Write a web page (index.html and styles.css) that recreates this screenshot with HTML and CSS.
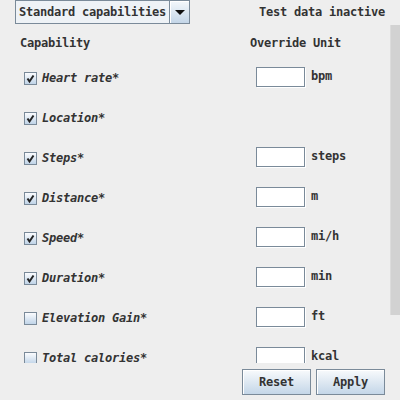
FILE: index.html
```html
<!DOCTYPE html>
<html>
<head>
<meta charset="utf-8">
<link rel="stylesheet" href="styles.css">
</head>
<body>
<div class="top">
  <div class="combo">
    <div class="combo-text">Standard capabilities</div>
    <div class="combo-btn"><span class="arrow"></span></div>
  </div>
  <div class="status">Test data inactive</div>
</div>
<div class="main">
  <div class="viewport">
    <div class="grid">
      <div class="hdr">Capability</div>
      <div class="hdr">Override</div>
      <div class="hdr unit-h">Unit</div>

      <div class="cap"><span class="cb"><svg viewBox="0 0 11 11" width="11" height="11"><path d="M2.5 5.5 L4.5 8.5 L8.5 2.5" fill="none" stroke="#222" stroke-width="2"/></svg></span><span class="lbl">Heart rate*</span></div>
      <div class="ov"><span class="field"></span></div>
      <div class="unit">bpm</div>

      <div class="cap"><span class="cb"><svg viewBox="0 0 11 11" width="11" height="11"><path d="M2.5 5.5 L4.5 8.5 L8.5 2.5" fill="none" stroke="#222" stroke-width="2"/></svg></span><span class="lbl">Location*</span></div>
      <div class="ov"></div>
      <div class="unit"></div>

      <div class="cap"><span class="cb"><svg viewBox="0 0 11 11" width="11" height="11"><path d="M2.5 5.5 L4.5 8.5 L8.5 2.5" fill="none" stroke="#222" stroke-width="2"/></svg></span><span class="lbl">Steps*</span></div>
      <div class="ov"><span class="field"></span></div>
      <div class="unit">steps</div>

      <div class="cap"><span class="cb"><svg viewBox="0 0 11 11" width="11" height="11"><path d="M2.5 5.5 L4.5 8.5 L8.5 2.5" fill="none" stroke="#222" stroke-width="2"/></svg></span><span class="lbl">Distance*</span></div>
      <div class="ov"><span class="field"></span></div>
      <div class="unit">m</div>

      <div class="cap"><span class="cb"><svg viewBox="0 0 11 11" width="11" height="11"><path d="M2.5 5.5 L4.5 8.5 L8.5 2.5" fill="none" stroke="#222" stroke-width="2"/></svg></span><span class="lbl">Speed*</span></div>
      <div class="ov"><span class="field"></span></div>
      <div class="unit">mi/h</div>

      <div class="cap"><span class="cb"><svg viewBox="0 0 11 11" width="11" height="11"><path d="M2.5 5.5 L4.5 8.5 L8.5 2.5" fill="none" stroke="#222" stroke-width="2"/></svg></span><span class="lbl">Duration*</span></div>
      <div class="ov"><span class="field"></span></div>
      <div class="unit">min</div>

      <div class="cap"><span class="cb"></span><span class="lbl">Elevation Gain*</span></div>
      <div class="ov"><span class="field"></span></div>
      <div class="unit">ft</div>

      <div class="cap"><span class="cb"></span><span class="lbl">Total calories*</span></div>
      <div class="ov"><span class="field"></span></div>
      <div class="unit">kcal</div>
    </div>
  </div>
  <div class="scrollbar"><div class="thumb"></div></div>
</div>
<div class="buttons">
  <button class="btn">Reset</button>
  <button class="btn">Apply</button>
</div>
</body>
</html>
```
FILE: styles.css
```css
html, body {
  margin: 0;
  padding: 0;
  background: #eeeeee;
}
body {
  width: 400px;
  height: 400px;
  overflow: hidden;
  font-family: "DejaVu Sans Mono", "Liberation Mono", monospace;
  font-weight: bold;
  font-size: 12px;
  letter-spacing: -0.22px;
  color: #333333;
}
.top {
  height: 25px;
  display: flex;
  align-items: flex-start;
  justify-content: space-between;
}
.combo {
  margin-left: 15px;
  width: 175px;
  height: 24px;
  box-sizing: border-box;
  border: 1px solid #7a8a99;
  display: flex;
}
.combo-text {
  flex: 1;
  background: #eef2f6;
  padding-left: 3px;
  line-height: 22px;
  border-right: 1px solid #7a8a99;
}
.combo-btn {
  width: 19px;
  background: linear-gradient(#f4f8fb, #c4d6e8);
  display: flex;
  align-items: center;
  justify-content: center;
  box-shadow: inset 1px 1px 0 #ffffff;
}
.arrow {
  width: 0;
  height: 0;
  border-left: 5px solid transparent;
  border-right: 5px solid transparent;
  border-top: 5px solid #111;
  margin-top: 1px;
}
.status {
  margin-right: 15px;
  line-height: 24px;
}
.main {
  display: flex;
  height: 338px;
}
.viewport {
  width: 390px;
  height: 338px;
  overflow: hidden;
}
.grid {
  display: grid;
  grid-template-columns: 230px 61px auto;
  grid-template-rows: 32px;
  grid-auto-rows: 40px;
  padding-left: 20px;
}
.hdr {
  padding-top: 10px;
  line-height: 16px;
}
.unit-h {
  margin-left: 2px;
}
.cap {
  display: flex;
  align-items: center;
  padding-left: 4px;
}
.cap .lbl {
  margin-top: 2px;
}
.cb {
  width: 13px;
  height: 13px;
  box-sizing: border-box;
  border: 1px solid #7a8a99;
  background: linear-gradient(#fbfcfe, #c0d4e8);
  margin-right: 5px;
  margin-top: 2px;
  display: flex;
}
.cb svg {
  display: block;
}
.lbl {
  font-style: italic;
}
.ov {
  display: flex;
  align-items: center;
  padding-left: 6px;
}
.field {
  width: 49px;
  height: 20px;
  box-sizing: border-box;
  background: #ffffff;
  border: 1px solid #7a8a99;
  box-shadow: 1px 1px 0 #ffffff;
  margin-top: -1px;
}
.unit {
  display: flex;
  align-items: center;
  margin-top: -3px;
}
.scrollbar {
  width: 10px;
  height: 338px;
}
.thumb {
  height: 290px;
  background: #d2d2d2;
  box-shadow: inset 1px 0 0 #dcdcdc;
}
.buttons {
  display: flex;
  justify-content: flex-end;
  gap: 5px;
  padding-top: 6px;
  padding-right: 15px;
}
.btn {
  width: 69px;
  height: 26px;
  box-sizing: border-box;
  border: 1px solid #7a8a99;
  background: linear-gradient(#f8fafc, #c4d6e8);
  box-shadow: inset 1px 1px 0 #ffffff;
  font: inherit;
  letter-spacing: inherit;
  color: #333333;
  padding: 0;
}
```
